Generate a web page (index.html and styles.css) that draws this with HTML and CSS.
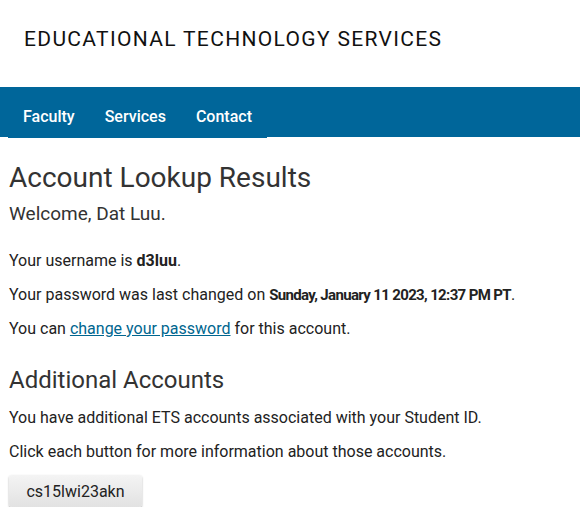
FILE: index.html
```html
<!DOCTYPE html>
<html>
<head>
<meta charset="utf-8">
<link rel="stylesheet" href="styles.css">
</head>
<body>
<header class="site-header">
  <div class="site-title">EDUCATIONAL TECHNOLOGY SERVICES</div>
</header>
<nav class="navbar">
  <ul class="nav-list">
    <li><a href="#">Faculty</a></li>
    <li><a href="#">Services</a></li>
    <li><a href="#">Contact</a></li>
  </ul>
</nav>
<main class="content">
  <h1 class="page-title">Account Lookup Results</h1>
  <h2 class="welcome">Welcome, Dat Luu.</h2>
  <p>Your username is <strong>d3luu</strong>.</p>
  <p>Your password was last changed on <strong class="date">Sunday, January 11 2023, 12:37 PM PT</strong>.</p>
  <p>You can <a href="#" class="link">change your password</a> for this account.</p>
  <h2 class="section-title">Additional Accounts</h2>
  <p>You have additional ETS accounts associated with your Student ID.</p>
  <p>Click each button for more information about those accounts.</p>
  <button class="account-btn">cs15lwi23akn</button>
</main>
</body>
</html>
```

FILE: styles.css
```css
html, body {
  margin: 0;
  padding: 0;
  background: #fff;
}
body {
  font-family: Roboto, "Liberation Sans", sans-serif;
  color: #222;
}
.site-header {
  height: 87px;
  padding-left: 24px;
  box-sizing: border-box;
  display: flex;
  align-items: center;
}
.site-title {
  font-size: 21px;
  letter-spacing: 1.33px;
  color: #111;
  margin-top: -10px;
}
.navbar {
  background: #00669a;
  height: 50px;
}
.nav-list {
  list-style: none;
  margin: 0 0 0 8px;
  padding: 0;
  display: inline-flex;
  height: 51px;
  background: #00669a;
}
.nav-list li a {
  display: block;
  padding: 0 15px;
  line-height: 60px;
  height: 51px;
  color: #fff;
  text-decoration: none;
  font-size: 16px;
  font-weight: 500;
}
.content {
  padding: 0 9px;
}
.page-title {
  font-size: 28px;
  font-weight: 400;
  color: #333;
  margin: 24px 0 0;
  line-height: 34px;
}
.welcome {
  font-size: 19px;
  font-weight: 400;
  color: #333;
  margin: 6px 0 23px;
  line-height: 26px;
}
p {
  font-size: 16px;
  line-height: 22px;
  margin: 12px 0 0;
}
.welcome + p {
  margin-top: 0;
}
strong {
  font-weight: 700;
}
.date {
  font-size: 15px;
  letter-spacing: -0.65px;
}
.link {
  color: #00668f;
  text-decoration: underline;
}
.section-title {
  font-size: 24px;
  font-weight: 400;
  color: #333;
  margin: 25px 0 0;
  line-height: 30px;
}
.account-btn {
  margin-top: 12px;
  font-family: Roboto, "Liberation Sans", sans-serif;
  font-size: 16px;
  color: #222;
  padding: 0 12px;
  height: 32px;
  width: 133px;
  border: none;
  border-radius: 3px;
  background: linear-gradient(#f4f4f4, #e2e2e2);
  box-shadow: 0 1px 2px rgba(0,0,0,0.35);
}
```
